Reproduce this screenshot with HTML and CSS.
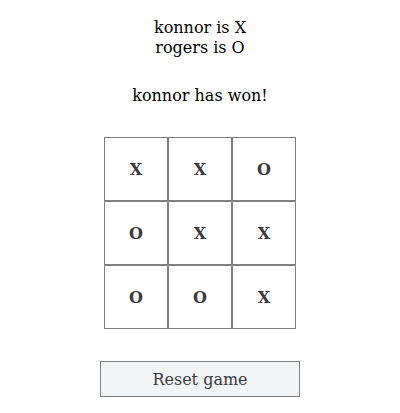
FILE: index.html
```html
<!DOCTYPE html>
<html>
<head>
<meta charset="utf-8">
<link rel="stylesheet" href="styles.css">
</head>
<body>
<div class="app">
  <div class="players">
    <div>konnor is X</div>
    <div>rogers is O</div>
  </div>
  <div class="status">konnor has won!</div>
  <div class="board">
    <div class="cell">X</div>
    <div class="cell">X</div>
    <div class="cell">O</div>
    <div class="cell">O</div>
    <div class="cell">X</div>
    <div class="cell">X</div>
    <div class="cell">O</div>
    <div class="cell">O</div>
    <div class="cell">X</div>
  </div>
  <button class="reset">Reset game</button>
</div>
</body>
</html>
```

FILE: styles.css
```css
html, body {
  margin: 0;
  padding: 0;
  background: #fff;
}
body {
  font-family: "DejaVu Serif", serif;
  font-size: 16px;
  color: #000;
}
.app {
  display: flex;
  flex-direction: column;
  align-items: center;
  padding-top: 15px;
}
.players {
  text-align: center;
  line-height: 20px;
  padding-top: 3px;
}
.status {
  margin-top: 28px;
  line-height: 20px;
}
.board {
  margin-top: 31px;
  display: grid;
  grid-template-columns: repeat(3, 64px);
  grid-template-rows: repeat(3, 64px);
}
.cell {
  box-sizing: border-box;
  border: 1px solid #808080;
  display: flex;
  align-items: center;
  justify-content: center;
  font-weight: bold;
  color: #3a3a3f;
}
.reset {
  margin-top: 32px;
  box-sizing: border-box;
  width: 200px;
  height: 36px;
  background: #f3f4f6;
  border: 1px solid #808080;
  font-family: "DejaVu Serif", serif;
  font-size: 16px;
  color: #3a3a3f;
  padding: 0;
}
```
